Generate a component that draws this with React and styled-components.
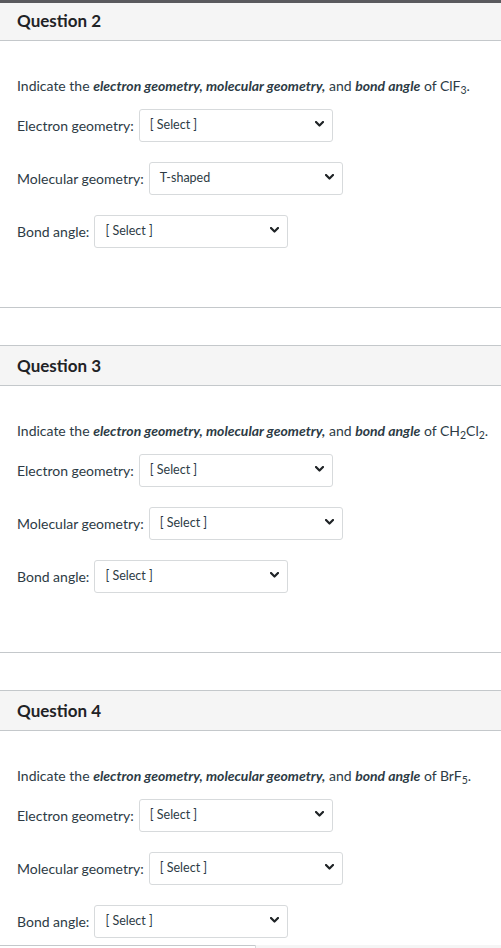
import React from "react";
import styled, { createGlobalStyle } from "styled-components";

const GlobalStyle = createGlobalStyle`
  html, body {
    margin: 0;
    padding: 0;
    background: #fff;
  }
  body {
    font-family: Lato, "Open Sans", "Liberation Sans", sans-serif;
    color: #2d3b45;
  }
`;

const Page = styled.div`
  width: 501px;
  border-top: 3px solid #5a5a5e;
  display: flex;
  flex-direction: column;
  gap: 37px;
`;

const QuestionBox = styled.section`
  border-top: ${(p) => (p.$first ? "none" : "1px solid #c4c8cb")};
  border-bottom: 1px solid #c4c8cb;
`;

const Header = styled.div`
  box-sizing: border-box;
  height: ${(p) => (p.$first ? "38px" : "40px")};
  display: flex;
  align-items: center;
  padding: 0 0 ${(p) => (p.$first ? "3px" : "1px")} 17px;
  background: #f5f5f5;
  border-bottom: 1px solid #c4c8cb;
  font-weight: 700;
  font-size: 17px;
  color: #1f2326;
`;

const Body = styled.div`
  padding: 35px 16px 59px 17px;
`;

const Prompt = styled.p`
  margin: 0 0 13px;
  font-size: 14px;
  line-height: 20px;
  white-space: nowrap;

  b {
    font-weight: 700;
    font-style: italic;
  }

  sub {
    font-size: 0.75em;
    line-height: 0;
    vertical-align: -0.25em;
  }
`;

const Row = styled.div`
  display: flex;
  align-items: center;
  gap: 5px;
  margin-bottom: 20px;
  font-size: 14px;

  &:last-child {
    margin-bottom: 0;
  }
`;

const Label = styled.span`
  white-space: nowrap;
`;

const SelectBox = styled.div`
  box-sizing: border-box;
  width: 194px;
  height: 33px;
  display: flex;
  align-items: center;
  justify-content: space-between;
  padding: 0 8px 3px 10px;
  border: 1px solid #d7dadc;
  border-radius: 3px;
  background: #fff;
  font-size: 12.5px;
  color: #2d3b45;
`;

const Footer = styled.div`
  position: fixed;
  left: 0;
  right: 0;
  bottom: 0;
  height: 3px;
  display: flex;
`;

const FooterLeft = styled.div`
  width: 255px;
  border-top: 1px solid #c4c8cb;
  background: #fff;
`;

const FooterRight = styled.div`
  flex: 1;
  background: #f5f5f5;
  border-left: 1px solid #d7dadc;
`;

const Chevron = () => (
  <svg width="9" height="6" viewBox="0 0 9 6" aria-hidden="true">
    <polyline
      points="1,1 4.5,4.5 8,1"
      fill="none"
      stroke="#1f2326"
      strokeWidth="2.2"
      strokeLinecap="round"
      strokeLinejoin="round"
    />
  </svg>
);

const Select = ({ value }) => (
  <SelectBox>
    <span>{value}</span>
    <Chevron />
  </SelectBox>
);

const questions = [
  {
    title: "Question 2",
    formula: (
      <>
        ClF<sub>3</sub>
      </>
    ),
    molecular: "T-shaped"
  },
  {
    title: "Question 3",
    formula: (
      <>
        CH<sub>2</sub>Cl<sub>2</sub>
      </>
    ),
    molecular: "[ Select ]"
  },
  {
    title: "Question 4",
    formula: (
      <>
        BrF<sub>5</sub>
      </>
    ),
    molecular: "[ Select ]"
  }
];

function Question({ q, first }) {
  return (
    <QuestionBox $first={first}>
      <Header $first={first}>{q.title}</Header>
      <Body>
        <Prompt>
          Indicate the <b>electron geometry, molecular geometry,</b> and{" "}
          <b>bond angle</b> of {q.formula}.
        </Prompt>
        <Row>
          <Label>Electron geometry:</Label>
          <Select value="[ Select ]" />
        </Row>
        <Row>
          <Label>Molecular geometry:</Label>
          <Select value={q.molecular} />
        </Row>
        <Row>
          <Label>Bond angle:</Label>
          <Select value="[ Select ]" />
        </Row>
      </Body>
    </QuestionBox>
  );
}

export default function App() {
  return (
    <>
      <GlobalStyle />
      <Page>
        {questions.map((q, i) => (
          <Question key={q.title} q={q} first={i === 0} />
        ))}
      </Page>
      <Footer>
        <FooterLeft />
        <FooterRight />
      </Footer>
    </>
  );
}
